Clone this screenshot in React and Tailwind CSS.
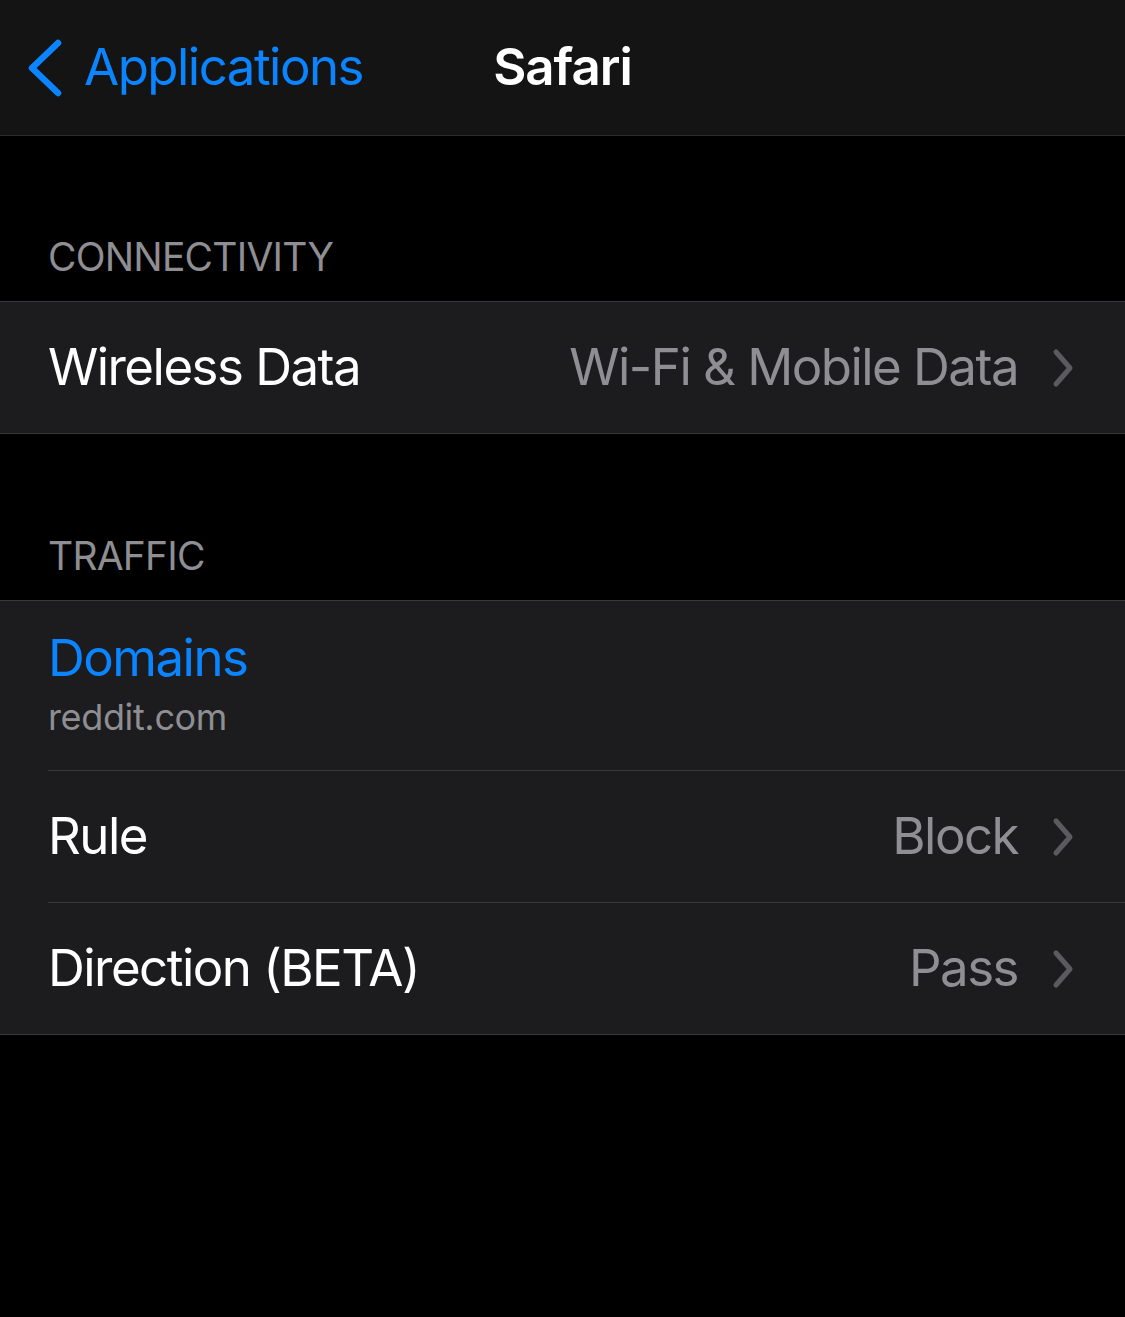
const font = { fontFamily: 'Inter, "Noto Sans", sans-serif' }

function Chevron() {
  return (
    <svg width="24" height="40" viewBox="0 0 24 40" className="shrink-0">
      <path d="M5 4 L19 20 L5 36" fill="none" stroke="#5b5b5f" strokeWidth="5" strokeLinecap="round" strokeLinejoin="round" />
    </svg>
  )
}

function Row({ label, value }) {
  return (
    <div className="flex items-center h-[131px] pl-[48px] pr-[50px]">
      <span className="flex-1 text-[51px] text-white tracking-[-0.03em]">{label}</span>
      <span className="text-[51px] text-[#8e8e93] tracking-[-0.03em] mr-[33px]">{value}</span>
      <Chevron />
    </div>
  )
}

export default function App() {
  return (
    <div className="w-[1125px] h-[1317px] bg-black overflow-hidden" style={font}>
      {/* nav bar */}
      <div className="relative h-[136px] bg-[#141414] border-b border-[#2c2c2e] flex items-center">
        <div className="flex items-center pl-[26px] gap-[20px] text-[#0a84ff]">
          <svg width="38" height="58" viewBox="0 0 38 58">
            <path d="M32 4 L6 29 L32 54" fill="none" stroke="#0a84ff" strokeWidth="6.5" strokeLinecap="round" strokeLinejoin="round" />
          </svg>
          <span className="text-[51px] tracking-[-0.03em]">Applications</span>
        </div>
        <span className="absolute left-1/2 -translate-x-1/2 text-[51px] font-semibold text-white tracking-[-0.02em]">Safari</span>
      </div>

      {/* connectivity */}
      <div className="h-[165px] flex items-end pl-[48px] pb-[15px]">
        <span className="text-[39px] text-[#8e8e93] tracking-[-0.02em]">CONNECTIVITY</span>
      </div>
      <div className="bg-[#1c1c1e] border-y border-[#38383a]">
        <Row label="Wireless Data" value="Wi-Fi & Mobile Data" />
      </div>

      {/* traffic */}
      <div className="h-[166px] flex items-end pl-[48px] pb-[15px]">
        <span className="text-[39px] text-[#8e8e93] tracking-[-0.02em]">TRAFFIC</span>
      </div>
      <div className="bg-[#1c1c1e] border-y border-[#38383a]">
        <div className="h-[169px] pl-[48px] pt-[24px] flex flex-col">
          <span className="text-[51px] leading-[66px] text-[#0a84ff] tracking-[-0.03em]">Domains</span>
          <span className="text-[36px] leading-[52px] text-[#8e8e93] tracking-[-0.01em]">reddit.com</span>
        </div>
        <div className="ml-[48px] border-t border-[#38383a]" />
        <Row label="Rule" value="Block" />
        <div className="ml-[48px] border-t border-[#38383a]" />
        <Row label="Direction (BETA)" value="Pass" />
      </div>
    </div>
  )
}
